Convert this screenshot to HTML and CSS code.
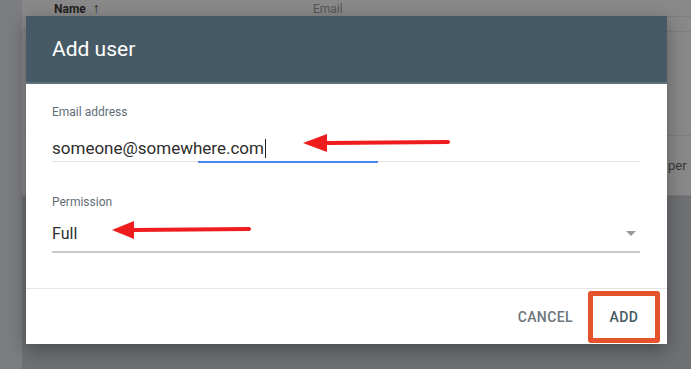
FILE: index.html
```html
<!DOCTYPE html>
<html lang="en">
<head>
    <meta charset="UTF-8">
    <meta name="viewport" content="width=device-width, initial-scale=1.0">
    <title>Add user</title>
    <link rel="stylesheet" href="styles.css">
</head>
<body>
    <div class="page">
        <div class="sidebar"></div>
        <div class="content">
            <div class="card">
                <div class="table-head">
                    <span class="col-name">Name <span class="sort">&#8593;</span></span>
                    <span class="col-email">Email</span>
                </div>
                <div class="table-row"></div>
                <div class="table-row tall"></div>
                <div class="table-foot">per</div>
            </div>
        </div>
    </div>

    <div class="dialog">
        <header class="dialog-head">
            <h1>Add user</h1>
        </header>

        <main class="dialog-body">
            <label class="field-label" for="email">Email address</label>
            <div class="input-row">
                <span class="input-text" id="email">someone@somewhere.com</span><span class="caret"></span>
            </div>

            <label class="field-label perm" for="perm">Permission</label>
            <div class="select-row" id="perm">
                <span class="select-text">Full</span>
                <span class="select-arrow"></span>
            </div>

            <!-- annotation arrows -->
            <svg class="arrow arrow-email" width="150" height="22" viewBox="0 0 150 22">
                <path d="M24 11 L146 10" stroke="#ee1c1c" stroke-width="4" stroke-linecap="round"/>
                <polygon points="1,11 25,2 25,20" fill="#ee1c1c"/>
            </svg>
            <svg class="arrow arrow-perm" width="142" height="22" viewBox="0 0 142 22">
                <path d="M22 11 L138 10" stroke="#ee1c1c" stroke-width="4" stroke-linecap="round"/>
                <polygon points="1,11 23,2 23,20" fill="#ee1c1c"/>
            </svg>
        </main>

        <footer class="dialog-foot">
            <button class="btn btn-cancel">CANCEL</button>
            <button class="btn btn-add">ADD</button>
        </footer>
    </div>
</body>
</html>
```

FILE: styles.css
```css
body {
    font-family: Roboto, "Liberation Sans", Arial, sans-serif;
    margin: 0;
    padding: 0;
    background-color: #6e7073;
    width: 691px;
    height: 369px;
    overflow: hidden;
    position: relative;
}

.page {
    display: flex;
    height: 369px;
}

.sidebar {
    width: 22px;
    background-color: #7c7d80;
}

.content {
    flex: 1;
}

.card {
    background-color: #898989;
    height: 195px;
    border-bottom: 1px solid #7a7a7a;
}

.table-head {
    display: flex;
    height: 16px;
    align-items: flex-end;
    border-bottom: 1px solid #7d7d7d;
    font-size: 12px;
    line-height: 14px;
}

.col-name {
    width: 259px;
    padding-left: 32px;
    font-weight: 700;
    color: #1e1e1e;
}

.sort {
    margin-left: 4px;
    font-size: 14px;
    font-weight: 700;
}

.col-email {
    color: #555;
}

.table-row {
    height: 14px;
    border-bottom: 1px solid #7f7f7f;
}

.table-row.tall {
    height: 103px;
}

.table-foot {
    padding-top: 22px;
    padding-left: 646px;
    font-size: 13px;
    color: #3a3a3a;
}

.dialog {
    position: absolute;
    left: 26px;
    top: 16px;
    width: 641px;
    background-color: #fff;
    box-shadow: 0 6px 18px rgba(0, 0, 0, 0.35);
}

.dialog-head {
    height: 66px;
    background-color: #465a65;
    border-bottom: 2px solid #5e717c;
    display: flex;
    align-items: center;
    padding-left: 26px;
}

.dialog-head h1 {
    margin: 0;
    font-size: 21px;
    font-weight: 400;
    color: #fff;
}

.dialog-body {
    position: relative;
    padding: 20px 27px 35px 26px;
    border-bottom: 1px solid #e4e6e8;
}

.field-label {
    display: block;
    font-size: 12px;
    line-height: 16px;
    color: #5f6d77;
}

.input-row {
    position: relative;
    display: flex;
    align-items: center;
    margin-top: 16px;
    height: 24px;
    border-bottom: 1px solid #e2e2e2;
    padding-bottom: 1px;
}

.input-row::after {
    content: "";
    position: absolute;
    left: 146px;
    bottom: -2px;
    width: 180px;
    height: 2px;
    background-color: #4a89f3;
}

.input-text {
    font-size: 17px;
    color: #2e2e2e;
}

.caret {
    width: 1.5px;
    height: 19px;
    margin-left: 1px;
    background-color: #222;
}

.field-label.perm {
    margin-top: 32px;
}

.select-row {
    display: flex;
    align-items: center;
    justify-content: space-between;
    margin-top: 9px;
    height: 29px;
    border-bottom: 2px solid #cacaca;
    padding-bottom: 3px;
}

.select-text {
    font-size: 16px;
    color: #2e2e2e;
}

.select-arrow {
    width: 0;
    height: 0;
    margin-right: 4px;
    border-left: 5px solid transparent;
    border-right: 5px solid transparent;
    border-top: 5px solid #9a9a9a;
}

.arrow {
    position: absolute;
}

.arrow-email {
    left: 276px;
    top: 48px;
}

.arrow-perm {
    left: 85px;
    top: 135px;
}

.dialog-foot {
    display: flex;
    justify-content: flex-end;
    align-items: center;
    padding: 2px 7px 1px 0;
}

.btn {
    font-family: Roboto, "Liberation Sans", Arial, sans-serif;
    font-size: 14px;
    font-weight: 500;
    letter-spacing: 0.4px;
    background: none;
    border: none;
    padding: 0;
    cursor: pointer;
}

.btn-cancel {
    color: #6c757b;
    margin-right: 15px;
}

.btn-add {
    width: 72px;
    height: 52px;
    color: #465a65;
    border: 5px solid #e5532d;
    border-radius: 3px;
}
```
